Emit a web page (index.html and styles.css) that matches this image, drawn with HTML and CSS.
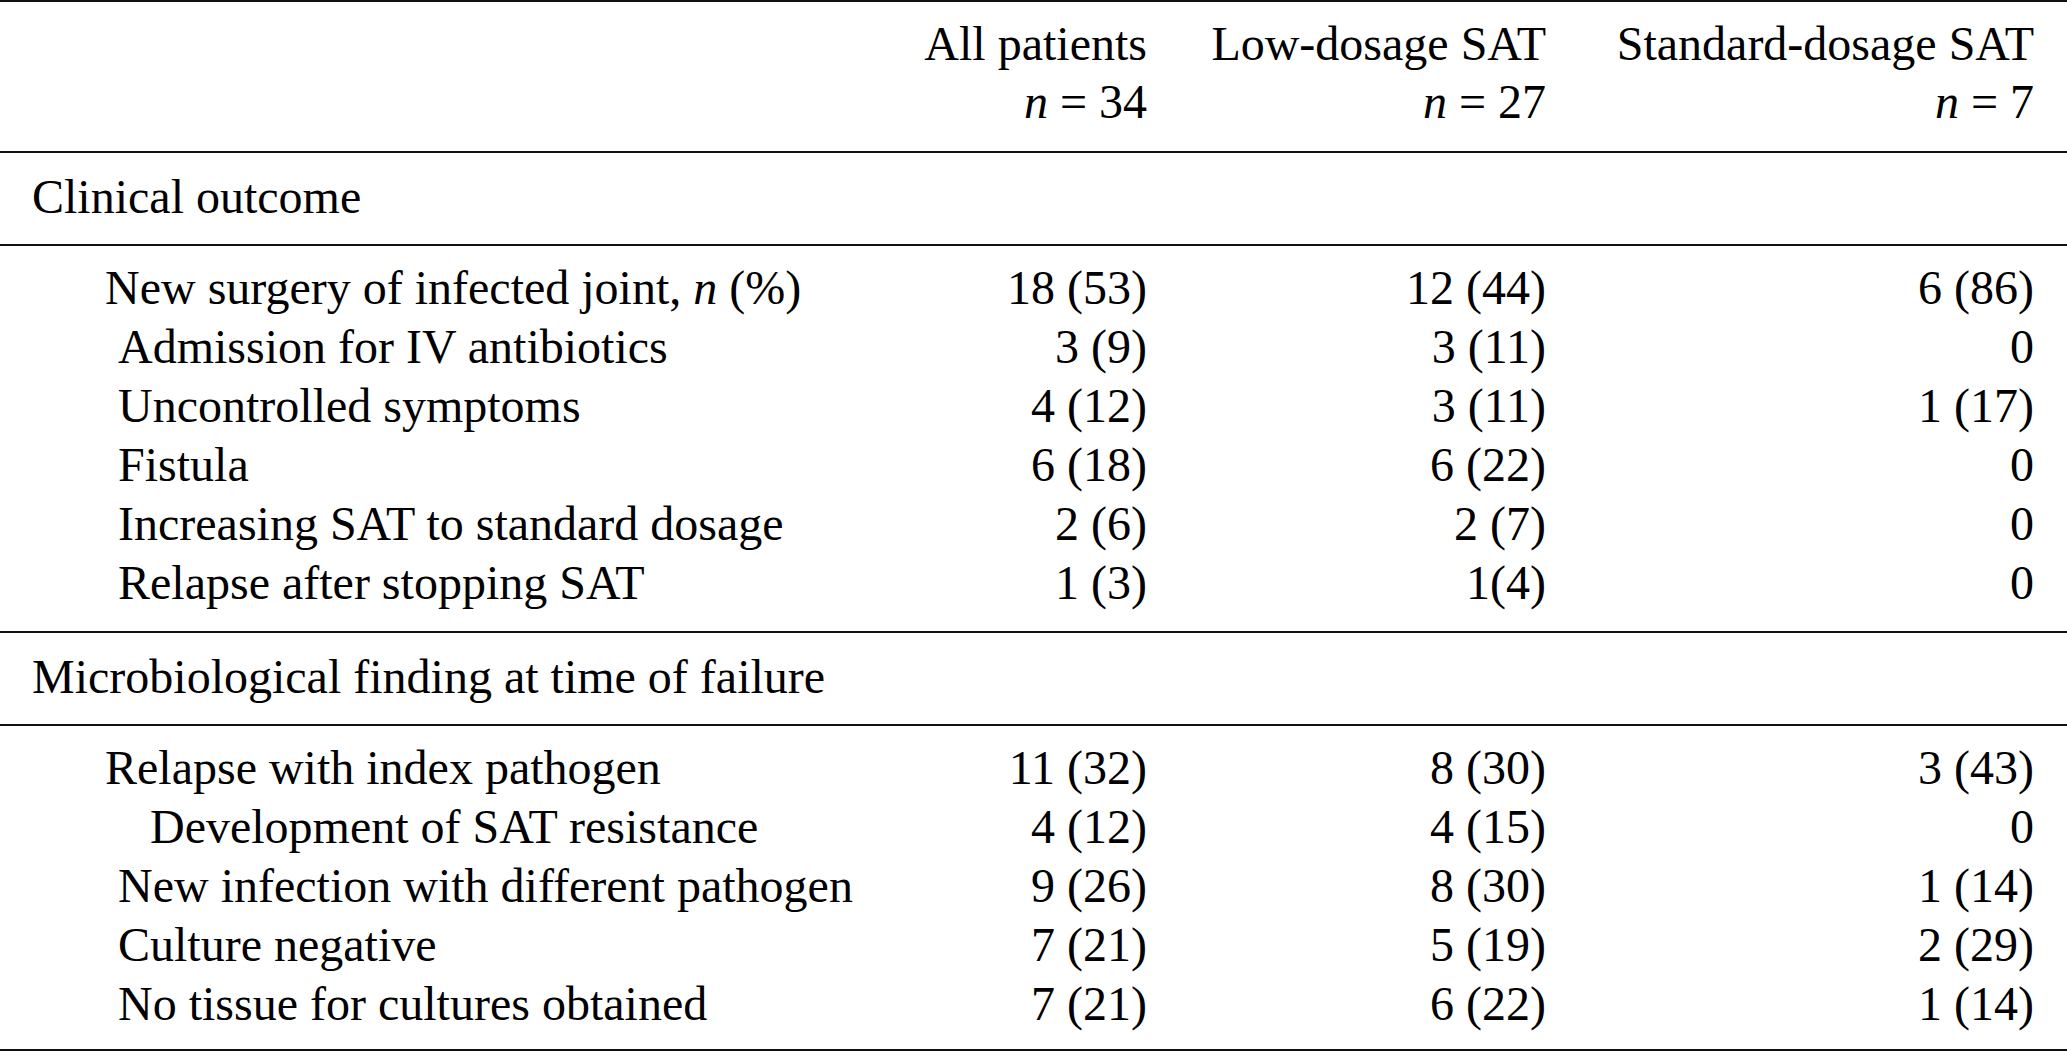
FILE: index.html
```html
<!DOCTYPE html>
<html lang="en">
<head>
<meta charset="utf-8">
<title>Outcome table</title>
<link rel="stylesheet" href="styles.css">
</head>
<body>
<table class="results">
  <colgroup>
    <col class="c-label">
    <col class="c-all">
    <col class="c-low">
    <col class="c-std">
  </colgroup>
  <thead class="head">
    <tr>
      <th></th>
      <th class="num">All patients</th>
      <th class="num">Low-dosage SAT</th>
      <th class="num last">Standard-dosage SAT</th>
    </tr>
    <tr>
      <th></th>
      <th class="num"><i>n</i> = 34</th>
      <th class="num"><i>n</i> = 27</th>
      <th class="num last"><i>n</i> = 7</th>
    </tr>
  </thead>
  <tbody class="section">
    <tr><td class="sec-title" colspan="4">Clinical outcome</td></tr>
  </tbody>
  <tbody class="data">
    <tr><td class="lv1">New surgery of infected joint, <i>n</i> (%)</td><td class="num">18 (53)</td><td class="num">12 (44)</td><td class="num last">6 (86)</td></tr>
    <tr><td class="lv2">Admission for IV antibiotics</td><td class="num">3 (9)</td><td class="num">3 (11)</td><td class="num last">0</td></tr>
    <tr><td class="lv2">Uncontrolled symptoms</td><td class="num">4 (12)</td><td class="num">3 (11)</td><td class="num last">1 (17)</td></tr>
    <tr><td class="lv2">Fistula</td><td class="num">6 (18)</td><td class="num">6 (22)</td><td class="num last">0</td></tr>
    <tr><td class="lv2">Increasing SAT to standard dosage</td><td class="num">2 (6)</td><td class="num">2 (7)</td><td class="num last">0</td></tr>
    <tr><td class="lv2">Relapse after stopping SAT</td><td class="num">1 (3)</td><td class="num">1(4)</td><td class="num last">0</td></tr>
  </tbody>
  <tbody class="section">
    <tr><td class="sec-title" colspan="4">Microbiological finding at time of failure</td></tr>
  </tbody>
  <tbody class="data final">
    <tr><td class="lv1">Relapse with index pathogen</td><td class="num">11 (32)</td><td class="num">8 (30)</td><td class="num last">3 (43)</td></tr>
    <tr><td class="lv3">Development of SAT resistance</td><td class="num">4 (12)</td><td class="num">4 (15)</td><td class="num last">0</td></tr>
    <tr><td class="lv2">New infection with different pathogen</td><td class="num">9 (26)</td><td class="num">8 (30)</td><td class="num last">1 (14)</td></tr>
    <tr><td class="lv2">Culture negative</td><td class="num">7 (21)</td><td class="num">5 (19)</td><td class="num last">2 (29)</td></tr>
    <tr><td class="lv2">No tissue for cultures obtained</td><td class="num">7 (21)</td><td class="num">6 (22)</td><td class="num last">1 (14)</td></tr>
  </tbody>
</table>
</body>
</html>
```
FILE: styles.css
```css
html, body {
  margin: 0;
  padding: 0;
  background: #ffffff;
}

body {
  font-family: "Liberation Serif", "Times New Roman", serif;
  font-size: 48px;
  color: #000000;
}

.results {
  width: 2067px;
  table-layout: fixed;
  border-collapse: collapse;
  border-top: 2px solid #111111;
  border-bottom: 2px solid #111111;
}

.c-label { width: 850px; }
.c-all { width: 297px; }
.c-low { width: 399px; }
.c-std { width: 521px; }

.results th,
.results td {
  padding: 0;
  font-weight: normal;
  white-space: nowrap;
  text-align: left;
  vertical-align: baseline;
}

.results .num {
  text-align: right;
}

.results .last {
  padding-right: 33px;
}

.results i {
  font-style: italic;
}

/* header */
.head th {
  line-height: 58px;
}

.head tr:first-child th {
  padding-top: 13px;
}

.head tr:last-child th {
  padding-bottom: 20px;
}

/* section titles */
.section {
  border-top: 2px solid #111111;
}

.section td {
  line-height: 59px;
  padding-top: 14px;
  padding-bottom: 18px;
}

.results .sec-title {
  padding-left: 32px;
}

/* data groups */
.data {
  border-top: 2px solid #111111;
}

.data td {
  line-height: 59px;
}

.data tr:first-child td {
  padding-top: 12px;
}

.data tr:last-child td {
  padding-bottom: 19px;
}

.data.final tr:last-child td {
  padding-bottom: 16px;
}

.results .lv1 { padding-left: 105px; }
.results .lv2 { padding-left: 118px; }
.results .lv3 { padding-left: 150px; }
```
